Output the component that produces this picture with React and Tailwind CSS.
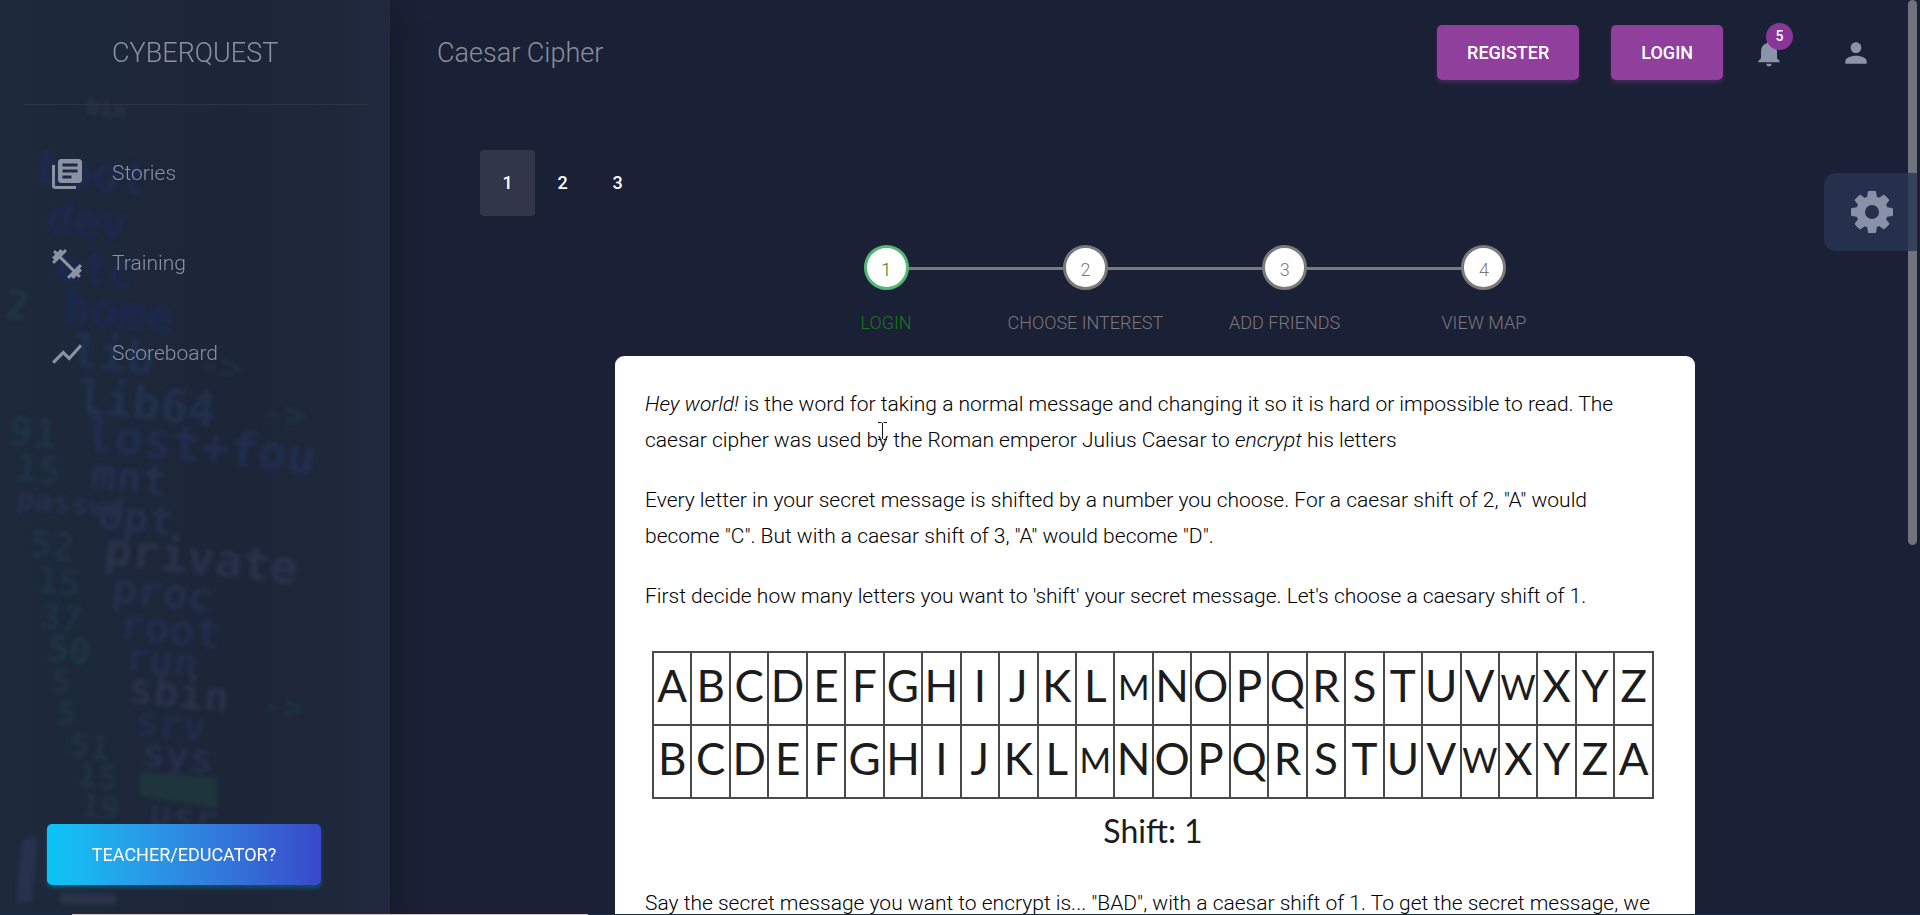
import React from "react";
import {
  MdLibraryBooks,
  MdFitnessCenter,
  MdShowChart,
  MdNotifications,
  MdPerson,
} from "react-icons/md";

const LETTERS = "ABCDEFGHIJKLMNOPQRSTUVWXYZ".split("");
const SHIFTED = [...LETTERS.slice(1), LETTERS[0]];

const NAV = [
  { label: "Stories", Icon: MdLibraryBooks },
  { label: "Training", Icon: MdFitnessCenter },
  { label: "Scoreboard", Icon: MdShowChart },
];

const STEPS = ["Login", "Choose Interest", "Add Friends", "View Map"];

/* Faint terminal listing behind the sidebar: [text, x, y, size, colour] */
const TERMINAL = [
  ["bin", 86, 114, 22, "#4a4c66"],
  ["boot", 36, 184, 46, "#22307c"],
  ["dev", 46, 232, 44, "#1f2f7c"],
  ["etc", 54, 280, 44, "#1f2f7c"],
  ["home", 62, 322, 46, "#1f2f7c"],
  ["lib", 70, 366, 46, "#23457c"],
  ["lib64", 76, 412, 46, "#2c4a76"],
  ["lost+fou", 84, 450, 48, "#263c7c"],
  ["mnt", 90, 488, 42, "#33427a"],
  ["opt", 97, 528, 42, "#33427a"],
  ["private", 103, 564, 46, "#454a70"],
  ["proc", 111, 602, 42, "#363f74"],
  ["root", 118, 638, 42, "#2e3b78"],
  ["run", 124, 670, 40, "#2e3b78"],
  ["sbin", 127, 702, 42, "#454a6e"],
  ["srv", 133, 734, 40, "#2d3875"],
  ["sys", 140, 766, 40, "#3a416e"],
  ["usr", 148, 826, 38, "#3a416e"],
  ["2", 4, 318, 40, "#21505a"],
  ["91", 8, 444, 40, "#21485a"],
  ["15", 14, 480, 38, "#21485a"],
  ["52", 28, 556, 38, "#21485a"],
  ["15", 36, 592, 36, "#21485a"],
  ["37", 38, 628, 36, "#21485a"],
  ["50", 46, 660, 36, "#21525a"],
  ["5", 50, 692, 34, "#214c5a"],
  ["5", 56, 724, 34, "#214c5a"],
  ["51", 68, 756, 34, "#214c5a"],
  ["15", 76, 786, 34, "#214c5a"],
  ["19", 80, 816, 32, "#214c5a"],
  ["passwd", 16, 508, 30, "#3a416e"],
  ["->", 198, 376, 36, "#21485a"],
  ["->", 262, 424, 36, "#21485a"],
  ["->", 262, 716, 34, "#21485a"],
];

function SidebarBackdrop() {
  return (
    <svg
      aria-hidden="true"
      className="absolute inset-0 h-full w-full"
      preserveAspectRatio="xMinYMin slice"
      viewBox="0 0 390 915"
    >
      <defs>
        <linearGradient id="side" x1="0" y1="0" x2="1" y2="0">
          <stop offset="0" stopColor="#1e293c" />
          <stop offset="0.6" stopColor="#1d2638" />
          <stop offset="1" stopColor="#20293d" />
        </linearGradient>
        <filter id="soft">
          <feGaussianBlur stdDeviation="2" />
        </filter>
      </defs>
      <rect width="390" height="915" fill="url(#side)" />
      <g
        filter="url(#soft)"
        opacity="0.34"
        fontFamily="DejaVu Sans Mono, monospace"
        fontWeight="700"
      >
        {TERMINAL.map(([text, x, y, size, fill], i) => (
          <text
            key={i}
            x={x}
            y={y}
            fontSize={size}
            fill={fill}
            transform={`rotate(6 ${x} ${y})`}
          >
            {text}
          </text>
        ))}
        <path d="M140 772l77 6v30l-77-12z" fill="#245548" />
        <path d="M22 840l16-4-6 66h-16z" fill="#3d4570" />
        <path d="M60 893l56 1v10H60z" fill="#4a4c66" />
      </g>
    </svg>
  );
}

function GearIcon({ className }) {
  return (
    <svg viewBox="128 128 1536 1536" fill="currentColor" className={className} aria-hidden="true">
      <path d="M1152 896q0-106-75-181t-181-75-181 75-75 181 75 181 181 75 181-75 75-181zm512-109v222q0 12-8 23t-20 13l-185 28q-19 54-39 91 35 50 107 138 10 12 10 25t-9 23q-27 37-99 108t-94 71q-12 0-26-9l-138-108q-44 23-91 38-16 136-29 186-7 28-36 28h-222q-14 0-24.5-8.5t-11.5-21.5l-28-184q-49-16-90-37l-141 107q-10 9-25 9-14 0-25-11-126-114-165-168-7-10-7-23 0-12 8-23 15-21 51-66.5t54-70.5q-27-50-41-99l-183-27q-13-2-21-12.5t-8-23.5v-222q0-12 8-23t19-13l186-28q14-46 39-92-40-57-107-138-10-12-10-24 0-10 9-23 26-36 98.5-107.5t94.5-71.5q13 0 26 10l138 107q44-23 91-38 16-136 29-186 7-28 36-28h222q14 0 24.5 8.5t11.5 21.5l28 184q49 16 90 37l142-107q9-9 24-9 13 0 25 10 129 119 165 170 7 8 7 22 0 12-8 23-15 21-51 66.5t-54 70.5q26 50 41 98l183 28q13 2 21 12.5t8 23.5z" />
    </svg>
  );
}

function Sidebar() {
  return (
    <aside className="relative z-10 flex w-[390px] shrink-0 flex-col overflow-hidden shadow-[0_15px_30px_-6px_rgba(0,0,0,0.5)]">
      <SidebarBackdrop />
      <div className="relative flex flex-1 flex-col">
        <div className="mr-[22px] ml-6 flex h-[105px] items-center border-b border-[#2c3446] pt-[2px] pl-[88px]">
          <a href="#home" className="text-[27px] font-light uppercase text-[#8b92a0]">
            Cyberquest
          </a>
        </div>
        <nav className="mt-6">
          <ul>
            {NAV.map(({ label, Icon }) => (
              <li key={label}>
                <a
                  href={`#${label.toLowerCase()}`}
                  className="flex h-[90px] items-center gap-[27px] pl-[49px] text-[21px] font-light text-[#8b92a0]"
                >
                  <Icon className="size-9 shrink-0 text-[#8b92a4]" />
                  <span>{label}</span>
                </a>
              </li>
            ))}
          </ul>
        </nav>
        <button
          type="button"
          className="mt-auto mb-[30px] ml-[47px] h-[61px] w-[274px] rounded-[5px] bg-linear-to-r from-[#06c5f5] to-[#3848c9] text-[18px] font-normal uppercase text-white shadow-[0_3px_4px_rgba(6,120,160,0.5)]"
        >
          Teacher/Educator?
        </button>
      </div>
    </aside>
  );
}

function Header() {
  const button =
    "h-[55px] rounded-[5px] bg-[#903f9c] px-[30px] text-[18px] font-medium uppercase text-white shadow-[0_3px_4px_rgba(144,63,156,0.3)]";
  return (
    <header className="flex h-[105px] items-center pr-[48px] pl-[47px]">
      <a href="#caesar" className="pt-[2px] text-[27px] font-light text-[#8b8f9c]">
        Caesar Cipher
      </a>
      <div className="ml-auto flex items-center">
        <button type="button" className={button}>
          Register
        </button>
        <button type="button" className={`${button} ml-8`}>
          Login
        </button>
        <button type="button" aria-label="Notifications" className="relative ml-[30px] text-[#8b92a9]">
          <MdNotifications className="size-8" />
          <span className="absolute -top-[14px] left-[13px] flex size-[27px] items-center justify-center rounded-full bg-[#8a3598] text-[14px] font-medium text-white">
            5
          </span>
        </button>
        <button type="button" aria-label="Account" className="ml-[55px] text-[#8b92a9]">
          <MdPerson className="size-8" />
        </button>
      </div>
    </header>
  );
}

function Stepper() {
  return (
    <ol className="mx-auto grid max-w-[857px] grid-cols-4 pl-[60px]">
      {STEPS.map((label, i) => (
        <li
          key={label}
          className={`relative flex flex-col items-center text-[18px] font-light uppercase ${
            i === 0 ? "text-[#157a15]" : "text-[#7a7a7a]"
          }`}
        >
          {i > 0 && <span className="absolute top-[22px] right-1/2 h-[3px] w-full bg-[#7a7a7a]" />}
          <span
            className={`z-10 flex size-[45px] items-center justify-center rounded-full border-[3px] bg-white pt-1 ${
              i === 0 ? "border-[#55b776]" : "border-[#7a7a7a]"
            }`}
          >
            {i + 1}
          </span>
          <span className="mt-[19px] leading-7">{label}</span>
        </li>
      ))}
    </ol>
  );
}

function CipherRow({ letters }) {
  return (
    <tr>
      {letters.map((l) => (
        <td
          key={l}
          className={`h-[73px] border-2 border-[#4a4a4a] p-0 text-center leading-none ${
            l === "M" || l === "W" ? "pb-1 text-[34px]" : "pb-2 text-[44px]"
          }`}
        >
          {l}
        </td>
      ))}
    </tr>
  );
}

function Article() {
  return (
    <article className="relative mx-auto mt-[19px] max-w-[1080px] rounded-[9px] bg-white px-[30px] pt-[30px] pb-10 text-[21px] leading-9 font-light text-black">
      <p>
        <em>Hey world!</em> is the word for taking a normal message and changing it so it is hard or
        impossible to read. The caesar cipher was used by the Roman emperor Julius Caesar to{" "}
        <em>encrypt</em> his letters
      </p>
      <p className="mt-6">
        Every letter in your secret message is shifted by a number you choose. For a caesar shift of
        2, "A" would become "C". But with a caesar shift of 3, "A" would become "D".
      </p>
      <p className="mt-6">
        First decide how many letters you want to 'shift' your secret message. Let's choose a caesary
        shift of 1.
      </p>
      <figure className="mt-[37px] mr-[11px] ml-[7px] font-[Lato,sans-serif] font-normal text-[#1c1c1c]">
        <table className="w-full table-fixed border-collapse">
          <tbody>
            <CipherRow letters={LETTERS} />
            <CipherRow letters={SHIFTED} />
          </tbody>
        </table>
        <figcaption className="mt-[14px] text-center text-[32px]">Shift: 1</figcaption>
      </figure>
      <p className="mt-9">
        Say the secret message you want to encrypt is... "BAD", with a caesar shift of 1. To get the
        secret message, we shift every letter by one.
      </p>
      <svg
        aria-hidden="true"
        viewBox="0 0 9 18"
        className="absolute top-[66px] left-[263px] h-[18px] w-[9px]"
        fill="none"
        stroke="#111"
      >
        <path d="M0 .5h3.5M5.500 .5H9M4.500 1v16M0 17.500h3.500M5.500 17.500H9" />
      </svg>
    </article>
  );
}

export default function App() {
  return (
    <div className="relative flex h-screen overflow-hidden bg-[#1a2035] font-[Roboto,sans-serif]">
      <Sidebar />
      <main className="min-w-0 flex-1">
        <Header />
        <nav aria-label="Pages" className="mt-[45px] ml-[90px] flex text-[18px] font-medium text-white">
          <button type="button" aria-current="page" className="h-[66px] w-[55px] rounded-[4px] bg-[#313648] pb-[2px]">
            1
          </button>
          <button type="button" className="h-[66px] w-[55px] pb-[2px]">
            2
          </button>
          <button type="button" className="h-[66px] w-[55px] pb-[2px]">
            3
          </button>
        </nav>
        <section className="mt-[29px]">
          <Stepper />
          <Article />
        </section>
      </main>
      <div className="absolute top-0 right-[3px] h-[545px] w-[9px] rounded-full bg-[#6f737c]" />
      <button
        type="button"
        aria-label="Settings"
        className="absolute top-[173px] right-[3px] flex h-[78px] w-[93px] items-center rounded-l-[12px] bg-[#283552]/80 pl-[27px] text-[#8b90a9]"
      >
        <GearIcon className="size-[42px]" />
      </button>
      <div className="absolute inset-x-0 bottom-0 z-20 h-px bg-[#1b2a45]">
        <div className="ml-[72px] h-px w-[516px] bg-[#cfc3c8]" />
      </div>
    </div>
  );
}
